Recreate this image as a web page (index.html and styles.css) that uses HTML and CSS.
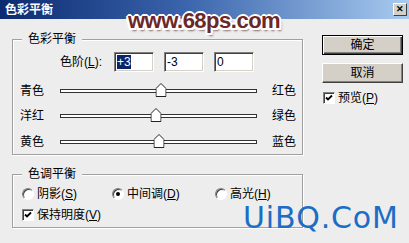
FILE: index.html
```html
<!doctype html>
<html>
<head>
    <meta charset="utf-8"/>
    <title>色彩平衡</title>
    <link rel="stylesheet" href="styles.css">
</head>
<body>
<div class="dialog">
    <div class="titlebar">
        <span class="title">色彩平衡</span>
        <span class="close">&#x2715;</span>
    </div>

    <div class="main">
        <div class="left">
            <div class="group balance">
                <span class="legend">色彩平衡</span>
                <div class="levels">
                    <span class="levels-label">色阶(<u>L</u>):</span>
                    <div class="field"><span class="sel">+3</span></div>
                    <div class="field">-3</div>
                    <div class="field">0</div>
                </div>
                <div class="slider-row first">
                    <span class="name">青色</span>
                    <div class="track"><svg class="thumb" style="left:51.5%" width="11" height="14" viewBox="0 0 11 14"><polygon points="0.5,5.5 5.5,0.5 10.5,5.5 10.5,13.5 0.5,13.5" fill="#fff" stroke="#222"/></svg></div>
                    <span class="name-right">红色</span>
                </div>
                <div class="slider-row">
                    <span class="name">洋红</span>
                    <div class="track"><svg class="thumb" style="left:48.5%" width="11" height="14" viewBox="0 0 11 14"><polygon points="0.5,5.5 5.5,0.5 10.5,5.5 10.5,13.5 0.5,13.5" fill="#fff" stroke="#222"/></svg></div>
                    <span class="name-right">绿色</span>
                </div>
                <div class="slider-row">
                    <span class="name">黄色</span>
                    <div class="track"><svg class="thumb" style="left:50%" width="11" height="14" viewBox="0 0 11 14"><polygon points="0.5,5.5 5.5,0.5 10.5,5.5 10.5,13.5 0.5,13.5" fill="#fff" stroke="#222"/></svg></div>
                    <span class="name-right">蓝色</span>
                </div>
            </div>

            <div class="group tone">
                <span class="legend">色调平衡</span>
                <div class="radio-row">
                    <span class="opt o1"><span class="radio"></span>阴影(<u>S</u>)</span>
                    <span class="opt o2"><span class="radio on"></span>中间调(<u>D</u>)</span>
                    <span class="opt"><span class="radio"></span>高光(<u>H</u>)</span>
                </div>
                <div class="check-row">
                    <span class="check"><svg width="8" height="8" viewBox="0 0 8 8"><path d="M1 3.5 L3 5.5 L7 1.5" fill="none" stroke="#000" stroke-width="1.8"/></svg></span>保持明度(<u>V</u>)
                </div>
            </div>
        </div>

        <div class="right">
            <div class="btn default">确定</div>
            <div class="btn">取消</div>
            <div class="check-row preview">
                <span class="check"><svg width="8" height="8" viewBox="0 0 8 8"><path d="M1 3.5 L3 5.5 L7 1.5" fill="none" stroke="#000" stroke-width="1.8"/></svg></span>预览(<u>P</u>)
            </div>
        </div>
    </div>

    <div class="mark-top">www.68ps.com</div>
    <div class="mark-bottom">UiBQ.CoM</div>
</div>
</body>
</html>
```

FILE: styles.css
```css
body {
    margin: 0;
    background: #ededed;
    font: 12px/14px "Liberation Sans", "Noto Sans CJK SC", sans-serif;
    color: #000;
}
.dialog {
    position: relative;
    width: 409px;
    height: 243px;
    overflow: hidden;
}
.titlebar {
    height: 19px;
    background: linear-gradient(to right, #0c2a70, #3a64ac 45%, #a8cbf0);
    display: flex;
    align-items: center;
    justify-content: space-between;
    padding: 0 2px 0 5px;
    color: #fff;
    font-weight: bold;
}
.close {
    width: 12px;
    height: 11px;
    background: #d4d0c8;
    border: 1px solid;
    border-color: #fff #404040 #404040 #fff;
    color: #000;
    font-size: 9px;
    line-height: 11px;
    text-align: center;
    font-weight: bold;
}
.main {
    display: flex;
}
.left {
    padding-left: 12px;
    width: 291px;
}
.group {
    position: relative;
    border: 1px solid #a0a0a0;
    box-shadow: inset 1px 1px #fff, 1px 1px #fff;
}
.legend {
    position: absolute;
    top: -8px;
    left: 9px;
    padding: 0 6px;
    background: #ededed;
}
.balance {
    margin-top: 20px;
    height: 114px;
}
.levels {
    display: flex;
    align-items: center;
    margin-top: 12px;
    height: 20px;
    padding-left: 47px;
}
.levels-label {
    width: 54px;
}
.field {
    box-sizing: border-box;
    width: 40px;
    height: 20px;
    margin-right: 10px;
    padding: 2px 2px 0;
    background: #fff;
    border: 1px solid;
    border-color: #808080 #fff #fff #808080;
    box-shadow: inset 1px 1px #404040, inset -1px -1px #d4d0c8;
    line-height: 15px;
}
.sel {
    background: #0a246a;
    color: #fff;
}
.slider-row {
    display: flex;
    align-items: center;
    height: 25.5px;
    padding-left: 7px;
}
.slider-row.first {
    margin-top: 6px;
}
.name {
    width: 40px;
}
.track {
    position: relative;
    width: 195px;
    height: 2px;
    border: 1px solid #333;
    background: #fff;
}
.thumb {
    position: absolute;
    top: -7px;
    transform: translateX(-50%);
}
.name-right {
    margin-left: 15px;
}
.tone {
    margin-top: 19px;
    height: 52px;
}
.radio-row {
    display: flex;
    align-items: center;
    height: 21px;
    margin-top: 8px;
    padding-left: 9px;
}
.opt {
    display: flex;
    align-items: center;
}
.o1 {
    width: 90px;
}
.o2 {
    width: 103px;
}
.radio {
    box-sizing: border-box;
    position: relative;
    width: 12px;
    height: 12px;
    margin-right: 3px;
    border-radius: 50%;
    background: #fff;
    border: 1px solid;
    border-color: #808080 #fff #fff #808080;
    box-shadow: inset 1px 1px #404040;
}
.radio.on::after {
    content: "";
    position: absolute;
    left: 3px;
    top: 3px;
    width: 4px;
    height: 4px;
    border-radius: 50%;
    background: #000;
}
.check-row {
    display: flex;
    align-items: center;
    height: 21px;
    padding-left: 9px;
}
.check {
    box-sizing: border-box;
    display: flex;
    align-items: center;
    justify-content: center;
    width: 12px;
    height: 12px;
    margin-right: 3px;
    background: #fff;
    border: 1px solid;
    border-color: #808080 #fff #fff #808080;
    box-shadow: inset 1px 1px #404040;
}
.right {
    margin-left: 19px;
    padding-top: 16px;
}
.btn {
    box-sizing: border-box;
    width: 81px;
    height: 20px;
    margin-bottom: 8px;
    background: #d4d0c8;
    border: 1px solid;
    border-color: #fff #404040 #404040 #fff;
    box-shadow: inset -1px -1px #808080;
    text-align: center;
    line-height: 18px;
}
.btn.default {
    border-color: #000;
    box-shadow: inset 1px 1px #fff, inset -1px -1px #404040, inset -2px -2px #808080;
}
.check-row.preview {
    margin-top: 7px;
    padding-left: 1px;
    height: 14px;
}
.mark-top {
    position: absolute;
    left: 128px;
    top: 10px;
    font: bold 22px/22px "Liberation Sans", sans-serif;
    letter-spacing: -0.5px;
    color: #6a2828;
    text-shadow: 2px 0 #fff, -2px 0 #fff, 0 2px #fff, 0 -2px #fff,
                 1px 1px #fff, -1px -1px #fff, 1px -1px #fff, -1px 1px #fff,
                 2px 2px #fff, -2px 2px #fff,
                 2px 3px 2px rgba(90, 40, 40, 0.7);
}
.mark-bottom {
    position: absolute;
    left: 243px;
    top: 203px;
    font: 30px/30px "DejaVu Sans", sans-serif;
    letter-spacing: 0.8px;
    color: #1b6dc6;
}
```
